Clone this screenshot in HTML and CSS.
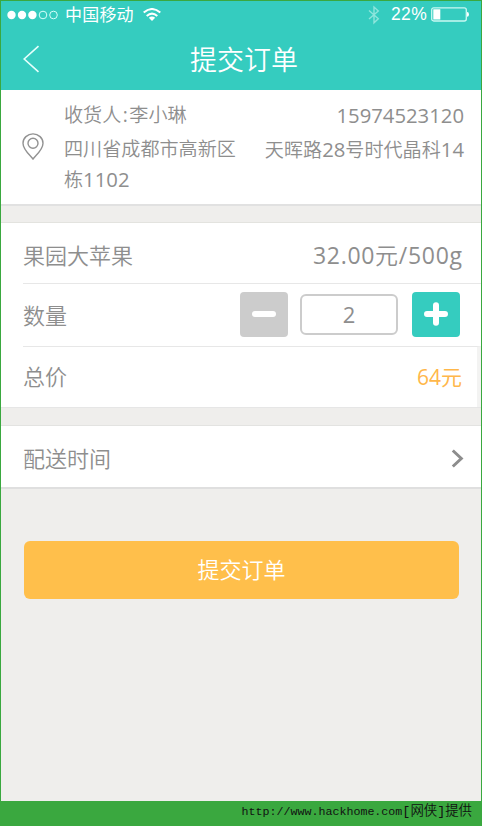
FILE: index.html
```html
<!DOCTYPE html>
<html lang="zh-CN">
<head>
<meta charset="utf-8">
<title>提交订单</title>
<link rel="stylesheet" href="styles.css">
</head>
<body>
<main class="screen">
  <header class="header">
    <div class="status">
      <svg class="signal" width="52" height="10" viewBox="0 0 52 10">
        <g fill="#fff"><circle cx="4.5" cy="5" r="4.2"/><circle cx="15" cy="5" r="4.2"/><circle cx="25.4" cy="5" r="4.2"/></g>
        <g fill="none" stroke="#d5fffa"><circle cx="36" cy="5" r="3.8"/><circle cx="46.5" cy="5" r="3.8"/></g>
      </svg>
      <span class="carrier">中国移动</span>
      <svg class="wifi" width="18" height="14" viewBox="0 0 18 14">
        <g fill="none" stroke="#fff" stroke-width="2"><path d="M.7 4.6Q9-2.6 17.3 4.6"/><path d="M3.7 8Q9 3.2 14.3 8"/></g>
        <path d="M5.8 9.8Q9 7.2 12.2 9.8L9 13z" fill="#fff"/>
      </svg>
      <svg class="bluetooth" width="12" height="20" viewBox="0 0 12 20">
        <path d="M1 5.5l9.3 8.2L6 17.8V2l4.3 4L1 14" fill="none" stroke="#8ee5dc" stroke-width="1.4"/>
      </svg>
      <span class="percent">22%</span>
      <svg class="battery" width="38" height="15" viewBox="0 0 38 15">
        <rect x=".7" y=".8" width="34.6" height="13.2" rx="2" fill="none" stroke="#c9f8f2" stroke-width="1.3"/>
        <path d="M2.3 2.3h7v10.2h-7zM36 5q2 0 2 2.4T36 9.8z" fill="#fff"/>
      </svg>
    </div>
    <div class="titlebar">
      <svg class="back" width="17" height="28" viewBox="0 0 17 28"><path d="M15.5 1.2L1.2 14l14.3 12.8" fill="none" stroke="#e5fffc" stroke-width="1.6"/></svg>
      <h1>提交订单</h1>
    </div>
  </header>

  <section class="address">
    <svg class="pin" width="22" height="27" viewBox="0 0 22 27">
      <path d="M11 26C8.4 22.4 1 16.8 1 10.2a10 9.3 0 0 1 20 0C21 16.8 13.6 22.4 11 26z" fill="none" stroke="#929292" stroke-width="1.4"/>
      <circle cx="11" cy="10.2" r="5" fill="none" stroke="#929292" stroke-width="1.4"/>
    </svg>
    <div class="details">
      <div class="line contact"><span>收货人<i class="colon">:</i>李小琳</span><span class="phone">15974523120</span></div>
      <div class="line"><span>四川省成都市高新区</span><span>天晖路<b>28</b>号时代晶科<b>14</b></span></div>
      <div class="line"><span>栋<b>1102</b></span></div>
    </div>
  </section>

  <section class="order">
    <div class="row product"><span>果园大苹果</span><span class="price"><b>32.00</b>元<b>/500g</b></span></div>
    <div class="row quantity">
      <span>数量</span>
      <div class="stepper">
        <button class="minus" aria-label="减少"><svg width="24" height="24" viewBox="0 0 24 24"><path d="M3 12h18" stroke="#fff" stroke-width="6" stroke-linecap="round"/></svg></button>
        <span class="count">2</span>
        <button class="plus" aria-label="增加"><svg width="24" height="24" viewBox="0 0 24 24"><path d="M3 12h18M12 3.3v17.4" stroke="#fff" stroke-width="6" stroke-linecap="round"/></svg></button>
      </div>
    </div>
    <div class="row total"><span>总价</span><span class="sum">64元</span></div>
  </section>

  <section class="delivery">
    <span>配送时间</span>
    <svg width="13" height="19" viewBox="0 0 13 19"><path d="M1.8 1.5L10.3 9.5 1.8 17.5" fill="none" stroke="#8d8d8d" stroke-width="3"/></svg>
  </section>

  <button class="submit">提交订单</button>
</main>
<footer class="footer"><span class="url">http://www.hackhome.com</span><span class="credit">[网侠]提供</span></footer>
</body>
</html>
```
FILE: styles.css
```css
* { box-sizing: border-box; }
body {
  margin: 0;
  width: 482px;
  height: 826px;
  display: flex;
  flex-direction: column;
  overflow: hidden;
  background: #3aa83f;
  color: #8e8e8e;
  font-family: "Open Sans", "Noto Sans CJK SC", sans-serif;
  font-weight: 350;
}
svg { display: block; flex: none; }
button { border: 0; padding: 0; font: inherit; }
.screen {
  height: 801px;
  border: 1px solid #3aa83f;
  border-bottom: 0;
  background: #efeeec;
}
.header { height: 89px; background: #35ccbf; color: #fff; }
.status {
  height: 27px;
  display: flex;
  align-items: center;
  padding: 0 12px 0 6px;
}
.carrier { margin-left: 6px; font-size: 17px; letter-spacing: .2px; line-height: 27px; font-weight: 400; }
.wifi { margin-left: 9px; }
.bluetooth { margin-left: auto; }
.percent { margin: 0 4px 0 11px; font: 17.5px/27px "Liberation Sans", sans-serif; letter-spacing: .3px; }
.titlebar {
  height: 62px;
  display: grid;
  grid-template-columns: 38px 1fr 38px;
  align-items: center;
}
.back { margin-left: 22px; }
h1 { margin: 1px 0 0 6px; font-size: 27px; line-height: 60px; font-weight: 350; text-align: center; }
.address {
  height: 116px;
  display: flex;
  padding: 9px 17px 0 21px;
  background: #fff;
  border-bottom: 2px solid #e1e1e1;
}
.pin { margin: 34px 20px 0 0; }
.details { flex: 1; font-size: 19.1px; }
.line { height: 30px; display: flex; justify-content: space-between; line-height: 32px; white-space: nowrap; }
.contact { height: 34px; }
.line b, .phone { font-size: 20.3px; font-weight: 400; }
.colon { display: inline-block; width: 8px; text-align: center; font-style: normal; font-weight: 400; }
.order {
  margin-top: 16px;
  border-top: 1px solid #e3e3df;
  border-bottom: 1px solid #e6e6e6;
  background: #fff;
  font-size: 22px;
}
.row {
  margin-left: 22px;
  padding-right: 19px;
  display: flex;
  align-items: center;
  justify-content: space-between;
}
.row + .row { border-top: 1px solid #e7e7e7; }
.row.product { height: 60px; padding-top: 1px; }
.row.quantity { height: 63px; padding: 0 21px 2px 0; }
.row.total { height: 61px; border-right: 4px solid #f3f3f2; padding: 0 15px 4px 0; }
.price { font-size: 23px; letter-spacing: .7px; margin-right: -.7px; }
.price b { font-weight: 400; }
.stepper { display: flex; align-items: center; }
.stepper button {
  width: 48px;
  height: 45px;
  display: grid;
  place-items: center;
  border-radius: 4px;
}
.stepper .minus { background: #ccc; }
.stepper .plus { background: #35ccbf; }
.count {
  width: 98px;
  height: 41px;
  margin: 1px 14px 0 12px;
  border: 2px solid #ccc;
  border-radius: 6px;
  font-weight: 400;
  text-align: center;
  line-height: 37px;
}
.sum { margin-top: 2px; color: #ffb74a; font-size: 21px; font-weight: 400; }
.delivery {
  height: 64px;
  margin-top: 17px;
  padding: 0 17px 0 22px;
  display: flex;
  align-items: center;
  justify-content: space-between;
  background: #fff;
  border-top: 1px solid #e3e3e1;
  border-bottom: 2px solid #dfdfdf;
  font-size: 22px;
}
.delivery svg { margin-top: 4px; }
.submit {
  display: block;
  width: 435px;
  height: 58px;
  margin: 52px 0 0 23px;
  padding-bottom: 4px;
  border-radius: 6px;
  background: #ffbf4b;
  color: #fff;
  font-size: 22px;
  text-align: center;
}
.footer {
  height: 25px;
  display: flex;
  justify-content: flex-end;
  padding-right: 10px;
  color: #111;
  font-weight: 350;
  line-height: 22px;
  white-space: nowrap;
}
.url { font-family: "Liberation Mono", monospace; font-size: 11.66px; }
.credit { font-family: "Liberation Mono", "Noto Sans CJK SC", monospace; font-size: 13.4px; }
```
